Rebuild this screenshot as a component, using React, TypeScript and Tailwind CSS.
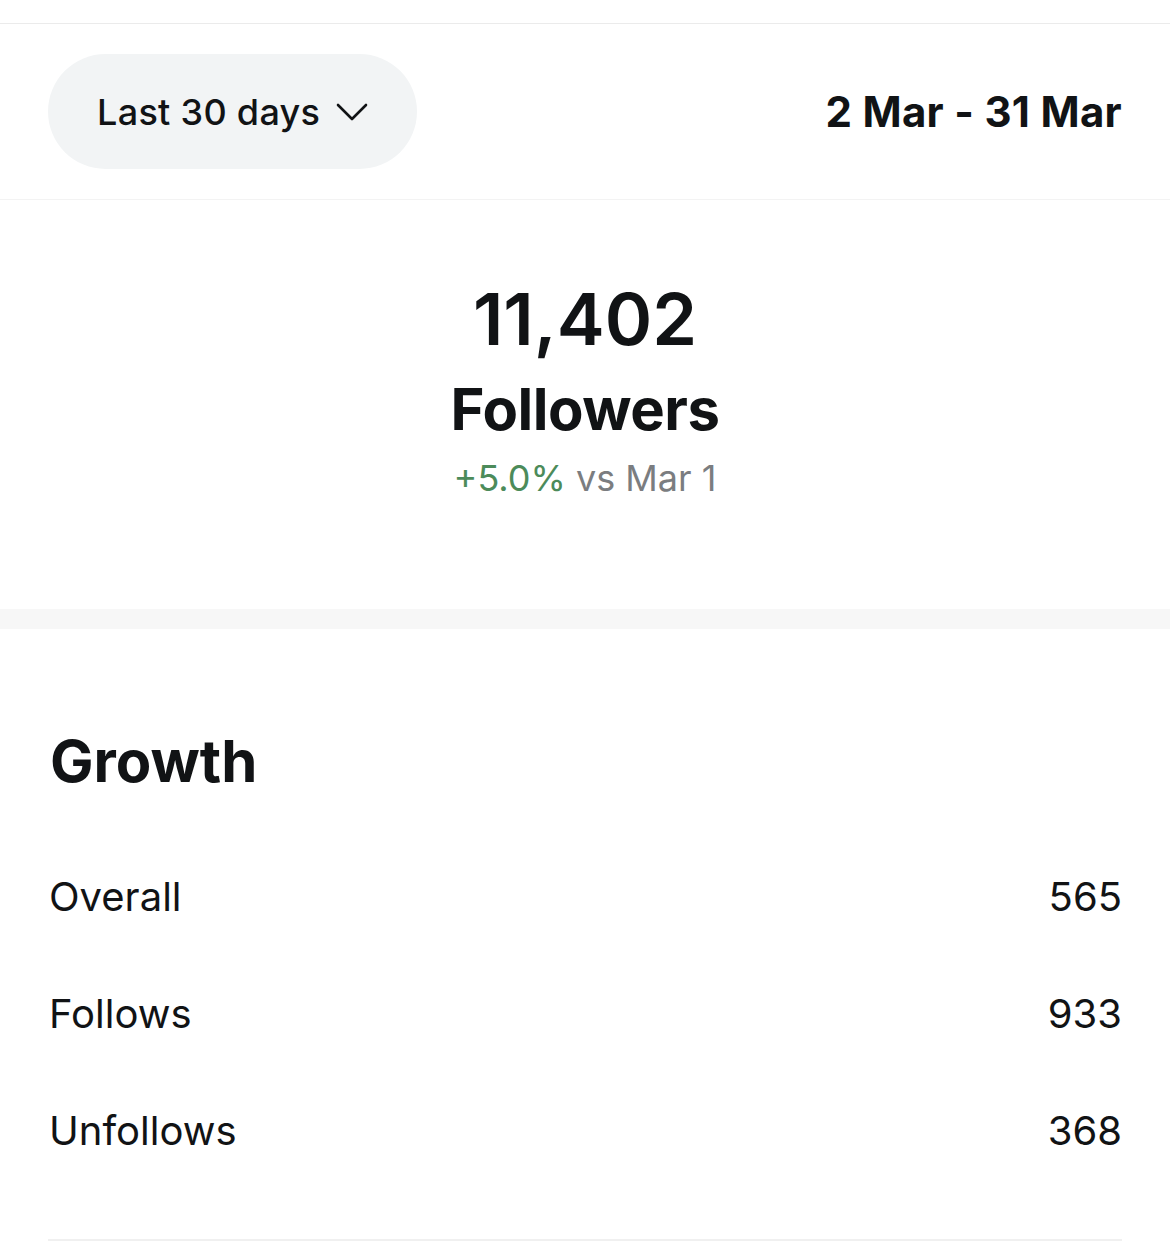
import React from "react";

const growthRows = [
  { label: "Overall", value: "565" },
  { label: "Follows", value: "933" },
  { label: "Unfollows", value: "368" },
];

const Chevron = () => (
  <svg width="32" height="20" viewBox="0 0 32 20" fill="none" className="text-[#111315]">
    <path d="M2 3l14 14L30 3" stroke="currentColor" strokeWidth="2.6" strokeLinecap="round" strokeLinejoin="round" />
  </svg>
);

export default function App() {
  return (
    <div className="min-h-[1250px] w-full bg-white font-['Inter',sans-serif] text-[#111315]">
      {/* top divider */}
      <div className="h-6 border-b border-[#ebebeb]" />

      {/* date range header */}
      <div className="flex h-[176px] items-center justify-between border-b border-[#f3f3f3] px-12">
        <button className="flex h-[115px] w-[369px] items-center gap-[16px] rounded-full bg-[#f2f4f5] pl-[49px]">
          <span className="text-[36px] font-medium tracking-[0.3px]">Last 30 days</span>
          <Chevron />
        </button>
        <span className="text-[42px] font-bold tracking-[0.3px]">2 Mar - 31 Mar</span>
      </div>

      {/* follower total */}
      <div className="flex h-[409px] flex-col items-center pt-[78px]">
        <span className="text-[72px] font-semibold leading-[82px]">11,402</span>
        <span className="mt-[15px] text-[58px] font-bold leading-[68px] tracking-[-0.5px]">Followers</span>
        <span className="mt-[13px] text-[36px] leading-[44px]">
          <span className="text-[#4c8b5a]">+5.0%</span>
          <span className="text-[#7b7d80]"> vs Mar 1</span>
        </span>
      </div>

      <div className="h-5 bg-[#f7f7f7]" />

      {/* growth breakdown */}
      <div className="px-12 pt-[97px]">
        <h2 className="pl-[2px] text-[58px] font-bold leading-[70px]">Growth</h2>
        <div className="mt-[42px]">
          {growthRows.map((row) => (
            <div key={row.label} className="flex h-[117px] items-center justify-between">
              <span className="pl-[1px] text-[40px]">{row.label}</span>
              <span className="text-[40px]">{row.value}</span>
            </div>
          ))}
        </div>
        <div className="mt-[50px] border-b-2 border-[#f0f0f0]" />
      </div>
    </div>
  );
}
